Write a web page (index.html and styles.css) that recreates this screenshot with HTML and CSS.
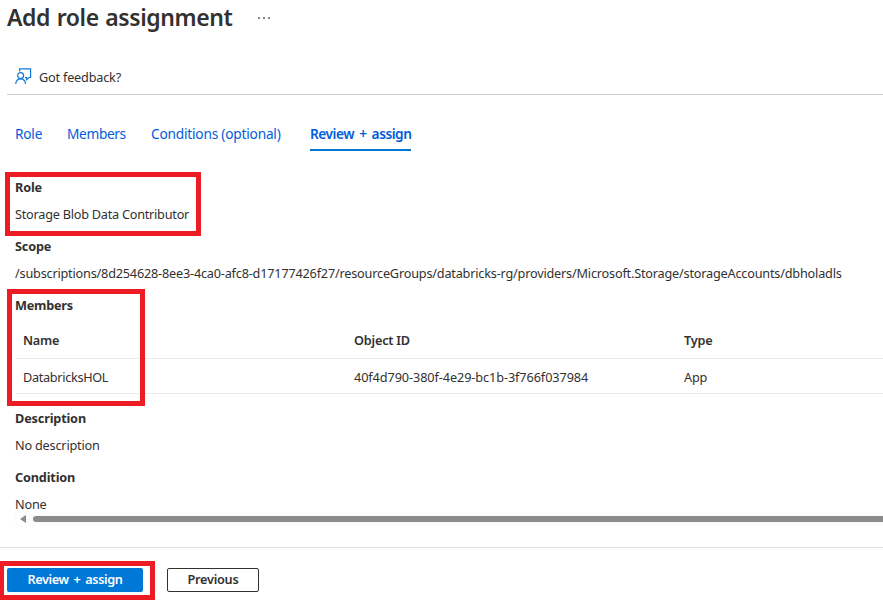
FILE: index.html
```
<!DOCTYPE html>
<html lang="en">
<head>
<meta charset="utf-8">
<title>Add role assignment</title>
<link rel="stylesheet" href="styles.css">
</head>
<body>
<header class="header"><h1 class="title">Add role assignment</h1><span class="more"><i></i><i></i><i></i></span></header>
<div class="toolbar">
<svg class="feedback-icon" width="17" height="17" viewBox="0 0 17 17" fill="none" stroke="#0f7ad6" stroke-width="1.2"><path d="M4.6 3.500V.8H15.600v8.700h-1.800l-2.300 2.300V9.500H10"/><circle cx="5.600" cy="7.600" r="3"/><path d="M.7 16c.2-3 2.200-5.200 4.900-5.200s4.700 2.200 4.900 5.200"/></svg>
<span class="feedback">Got feedback?</span>
</div>
<nav class="tabs">
<a class="tab">Role</a><a class="tab tab-members">Members</a><a class="tab">Conditions (optional)</a><a class="tab active">Review + assign</a>
</nav>
<main class="summary">
<h2>Role</h2>
<p class="role">Storage Blob Data Contributor</p>
<h2>Scope</h2>
<p>/subscriptions/8d254628-8ee3-4ca0-afc8-d17177426f27/resourceGroups/databricks-rg/providers/Microsoft.Storage/storageAccounts/dbholadls</p>
<h2 class="members-title">Members</h2>
<div class="table">
<div class="row head"><span>Name</span><span>Object ID</span><span>Type</span></div>
<div class="row"><span class="member">DatabricksHOL</span><span class="guid">40f4d790-380f-4e29-bc1b-3f766f037984</span><span>App</span></div>
</div>
<h2>Description</h2>
<p>No description</p>
<h2>Condition</h2>
<p class="last">None</p>
<div class="scrollbar"><i class="arrow"></i><i class="thumb"></i></div>
</main>
<footer class="footer"><button class="primary">Review + assign</button><button class="secondary">Previous</button></footer>
<div class="mark mark-role"></div>
<div class="mark mark-members"></div>
<div class="mark mark-submit"></div>
</body>
</html>
```
FILE: styles.css
```
* { box-sizing: border-box; }
body { margin: 0; width: 883px; height: 605px; overflow: hidden; background: #fff; color: #323130; font: 12.7px/20px "Noto Sans", sans-serif; letter-spacing: -0.2px; }
.header { display: flex; height: 58px; padding-left: 7px; }
.title { width: 225px; margin: 0; font-size: 23px; line-height: 34px; font-weight: 600; letter-spacing: -0.4px; word-spacing: 1px; white-space: nowrap; }
.more { display: flex; gap: 3px; padding: 17px 0 0 26px; }
.more i { width: 2px; height: 2px; background: #8a8886; }
.toolbar { display: flex; align-items: center; height: 37px; margin-left: 7px; padding: 0 0 0 8px; border-bottom: 1px solid #d0cecd; }
.feedback-icon { margin-right: 7px; }
.feedback { padding-top: 2px; }
.tabs { display: grid; grid-template-columns: 52px 84px 159px max-content; height: 56px; margin: 29px 0 0 15px; letter-spacing: -0.21px; }
.tab { height: 27px; color: #015cda; font-size: 13.7px; white-space: nowrap; }
.tab-members { letter-spacing: -0.35px; }
.tab.active { font-weight: 600; letter-spacing: -0.48px; word-spacing: 2px; border-bottom: 2px solid #0078d4; }
.summary { padding-left: 15px; height: 370px; }
h2 { margin: -3px 0 7px; font-size: 12.7px; line-height: 20px; font-weight: 700; letter-spacing: -0.16px; }
.members-title { letter-spacing: -0.25px; }
p { margin: 0 0 15px; line-height: 20px; white-space: nowrap; }
.role { letter-spacing: -0.24px; }
.last { margin-bottom: -2px; }
.table { margin-bottom: 17px; }
.row { display: grid; grid-template-columns: 331px 330px 1fr; height: 35px; padding: 2px 0 0 8px; align-items: center; border-bottom: 1px solid #edebe9; }
.head { height: 37px; padding: 0 0 1px 8px; font-weight: 600; }
.member { letter-spacing: -0.32px; }
.guid { letter-spacing: -0.09px; }
.scrollbar { display: flex; align-items: center; height: 14px; background: #fcfcfc; }
.arrow { border: solid transparent; border-width: 4px 6px 4px 0; border-right-color: #8b8b8b; margin: 0 7px 0 5px; }
.thumb { flex: 1; height: 6px; border-radius: 3px 0 0 3px; background: #8b8b8b; }
.footer { display: flex; gap: 24px; height: 58px; padding: 20px 0 0 7px; border-top: 1px solid #e1dfdd; }
button { height: 24px; padding: 0 0 2px; border-radius: 2px; font: 600 12.7px/20px "Noto Sans", sans-serif; letter-spacing: -0.4px; word-spacing: 2px; }
.primary { width: 136px; border: 0; background: #0078d7; color: #fff; }
.secondary { width: 92px; border: 1px solid #323130; background: #fff; color: #323130; letter-spacing: -0.25px; }
.mark { position: absolute; border: 5px solid #ed1c24; }
.mark-role { left: 5px; top: 172px; width: 196px; height: 64px; }
.mark-members { left: 7px; top: 289px; width: 138px; height: 117px; }
.mark-submit { left: -1px; top: 561px; width: 156px; height: 39px; }
```
